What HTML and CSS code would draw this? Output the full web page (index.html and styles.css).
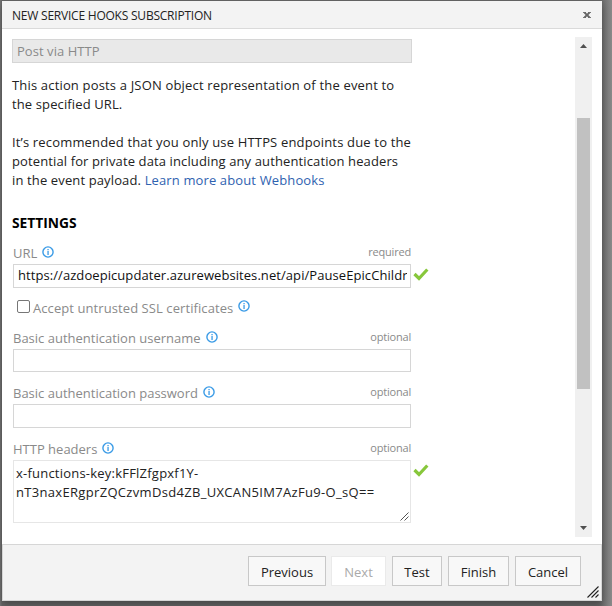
FILE: index.html
```html
<!DOCTYPE html>
<html lang="en">
<head>
<meta charset="utf-8">
<title>New Service Hooks Subscription</title>
<link rel="stylesheet" href="styles.css">
</head>
<body>
<svg class="symbols" width="0" height="0">
  <symbol id="info" viewBox="0 0 12 12"><circle cx="6" cy="6" r="5.1" fill="none" stroke="#3a9be6" stroke-width="1.4"/><path d="M5.4 3h1.3v1.2H5.4zM5.4 5h1.3V9H5.4z" fill="#3a9be6"/></symbol>
  <symbol id="check" viewBox="0 0 16 14"><path d="M1.5 6L6 10.5L14.3 1.5" fill="none" stroke="#87c73b" stroke-width="3.2"/></symbol>
</svg>
<div class="dialog">
  <header class="titlebar">
    <span class="title">NEW SERVICE HOOKS SUBSCRIPTION</span>
    <svg class="close" width="8" height="6" viewBox="0 0 8 6"><path d="M0 .5h3M5 .5h3M0 5.5h3M5 5.5h3" fill="none" stroke="#777"/><path d="M1.5 .5l5 5M6.5 .5l-5 5" fill="none" stroke="#666" stroke-width="1.8"/></svg>
  </header>
  <main class="body">
    <div class="content">
      <div class="action">Post via HTTP</div>
      <p class="intro"><span class="l1">This action posts a JSON object representation of the event to</span><br><span class="l2">the specified URL.</span></p>
      <p class="advice"><span class="l3">It’s recommended that you only use HTTPS endpoints due to the</span><br><span class="l4">potential for private data including any authentication headers</span><br><span class="l5">in the event payload. <a>Learn more about Webhooks</a></span></p>
      <h2>SETTINGS</h2>
      <div class="field url">
        <div class="label"><span class="name">URL</span><svg class="info"><use href="#info"/></svg><small>required</small></div>
        <div class="input"><span class="value">https://azdoepicupdater.azurewebsites.net/api/PauseEpicChildren</span></div>
        <svg class="check"><use href="#check"/></svg>
      </div>
      <div class="option"><i class="checkbox"></i><span class="name ssl">Accept untrusted SSL certificates</span><svg class="info"><use href="#info"/></svg></div>
      <div class="field user">
        <div class="label"><span class="name">Basic authentication username</span><svg class="info"><use href="#info"/></svg><small>optional</small></div>
        <div class="input"></div>
      </div>
      <div class="field pass">
        <div class="label"><span class="name">Basic authentication password</span><svg class="info"><use href="#info"/></svg><small>optional</small></div>
        <div class="input"></div>
      </div>
      <div class="field headers">
        <div class="label"><span class="name">HTTP headers</span><svg class="info"><use href="#info"/></svg><small>optional</small></div>
        <div class="textarea"><span class="h1">x-functions-key:kFFlZfgpxf1Y-</span><br><span class="h2">nT3naxERgprZQCzvmDsd4ZB_UXCAN5IM7AzFu9-O_sQ==</span>
          <svg class="grip" width="9" height="9" viewBox="0 0 9 9"><path d="M.5 8.5l8-8M4.5 8.5l4-4" fill="none" stroke="#555" stroke-width="1"/></svg>
        </div>
        <svg class="check"><use href="#check"/></svg>
      </div>
    </div>
    <div class="scrollbar">
      <svg width="7" height="4" viewBox="0 0 7 4"><path d="M0 4L3.5 0L7 4z" fill="#505050"/></svg>
      <div class="thumb"></div>
      <svg width="7" height="4" viewBox="0 0 7 4"><path d="M0 0L3.5 4L7 0z" fill="#505050"/></svg>
    </div>
  </main>
  <footer class="actions">
    <button class="b-prev"><span>Previous</span></button>
    <button class="b-next" disabled><span>Next</span></button>
    <button class="b-test"><span>Test</span></button>
    <button class="b-finish"><span>Finish</span></button>
    <button class="b-cancel"><span>Cancel</span></button>
    <svg class="resize" width="12" height="12" viewBox="0 0 12 12"><path d="M.5 11.5l11-11M4.5 11.5l7-7M8.5 11.5l3-3" fill="none" stroke="#222" stroke-width="1.1"/></svg>
  </footer>
</div>
</body>
</html>
```

FILE: styles.css
```css
* { box-sizing: border-box; }
body {
  margin: 0;
  height: 606px;
  padding: 1px 10px 5px 2px;
  overflow: hidden;
  background: linear-gradient(90deg, #777 0, #666 2px, #666 600px, #8a8a8a 612px);
  font: 13px/19px "Open Sans", "Noto Sans", sans-serif;
  color: #222;
}
.symbols { position: absolute; }
.dialog {
  display: flex;
  flex-direction: column;
  height: 600px;
  background: #fff;
  box-shadow: 0 4px 8px rgba(0, 0, 0, .3);
}
.titlebar {
  display: flex;
  align-items: center;
  justify-content: space-between;
  height: 28px;
  padding: 0 11px 0 10px;
  background: #f3f3f3;
  border-bottom: 1px solid #dadada;
}
.title { margin-top: 1px; font-size: 12px; letter-spacing: -.22px; white-space: nowrap; }
.close { margin-top: 1px; }
.body {
  display: flex;
  justify-content: space-between;
  height: 515px;
  padding: 8px 10px 7px 10px;
}
.content { width: 400px; padding-top: 2px; white-space: nowrap; }
.action {
  height: 24px;
  padding: 2px 4px;
  border: 1px solid #d6d6d6;
  background: #e9e9e9;
  color: #8a8a8a;
  letter-spacing: .05px;
}
p { margin: 0; }
.intro { margin-top: 13px; }
.advice { margin-top: 19px; }
.l1 { letter-spacing: .17px; }
.l2, .l4 { letter-spacing: .12px; }
.l3 { letter-spacing: .165px; }
.l5 { letter-spacing: .13px; }
a { color: #2f62b0; }
h2 { margin: 23px 0 0; font-size: 13.8px; line-height: 20px; font-weight: 700; color: #000; }
.field { position: relative; margin: 0 1px; }
.label { display: flex; align-items: center; height: 22px; color: #8a8a8a; }
.info { width: 12px; height: 12px; margin: -3px 0 0 5px; flex: none; }
.label small { margin: -4px 0 0 auto; font-size: 11px; letter-spacing: -.2px; }
.input { height: 24px; border: 1px solid #d6d6d6; padding: 1px 4px; overflow: hidden; }
.value { display: block; overflow: hidden; width: 389px; color: #111; letter-spacing: .07px; }
.check { position: absolute; width: 16px; height: 14px; left: 400px; top: 26px; }
.url { margin-top: 9px; }
.option { display: flex; align-items: center; height: 19px; margin-top: 10px; padding-left: 5px; color: #8a8a8a; }
.ssl { margin-top: 1px; letter-spacing: .08px; }
.checkbox { width: 13px; height: 13px; border: 1px solid #767676; border-radius: 2px; margin: -2px 3px 0 0; }
.user { margin-top: 10px; }
.user .input { height: 23px; }
.pass { margin-top: 10px; }
.headers { margin-top: 10px; }
.textarea { position: relative; height: 63px; padding: 3px 2px; border: 1px solid #e6e6e6; color: #222; }
.h1 { letter-spacing: .22px; }
.h2 { letter-spacing: .32px; }
.grip { position: absolute; right: 1px; bottom: 1px; }
.scrollbar {
  display: flex;
  flex-direction: column;
  align-items: center;
  width: 17px;
  height: 500px;
  padding: 7px 0;
  background: #f0f0f0;
}
.thumb { width: 13px; height: 271px; margin: 70px 0 auto; background: #c1c1c1; }
.actions {
  position: relative;
  display: flex;
  height: 57px;
  padding: 11px 0 0 245px;
  background: #f3f3f3;
  border: 1px solid #d6d6d6;
}
button {
  height: 30px;
  padding: 2px 0 0;
  border: 1px solid #c8c8c8;
  background: #f8f8f8;
  font: 13px/19px "Open Sans", "Noto Sans", sans-serif;
  color: #222;
  white-space: nowrap;
}
button:disabled { border-color: #eaeaea; background: #fff; color: #aaa; }
.b-prev { width: 78px; margin-right: 5px; }
.b-next { width: 55px; margin-right: 6px; }
.b-test { width: 50px; margin-right: 6px; }
.b-finish { width: 61px; margin-right: 6px; }
.b-cancel { width: 66px; }
.resize { position: absolute; right: 2px; bottom: 2px; }
```
